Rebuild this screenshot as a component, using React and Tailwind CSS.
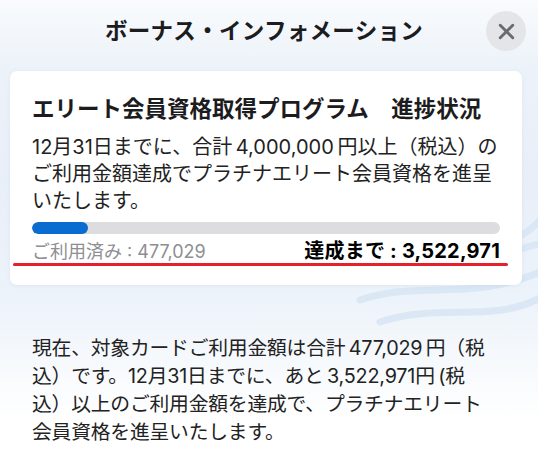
import { X } from 'lucide-react';

const used = 477029;
const goal = 4000000;

function Waves() {
  return (
    <svg className="absolute left-0 top-0" width="538" height="454" viewBox="0 0 538 454" fill="none">
      <g stroke="#d9e6f4" strokeWidth="7" strokeLinecap="round" opacity="0.9">
        <path d="M360 300 C 420 280, 470 302, 540 272" />
        <path d="M380 322 C 440 302, 490 324, 540 298" />
        <path d="M470 228 C 495 250, 520 242, 540 220" />
        <path d="M495 262 C 512 252, 526 246, 540 244" />
      </g>
    </svg>
  );
}

export default function App() {
  const pct = (used / goal) * 100;

  return (
    <div className="w-[550px] h-[454px] bg-white flex overflow-hidden font-['Inter','Noto_Sans_CJK_JP',sans-serif] text-[#1c1c1e]">
      <div className="relative w-[538px] h-full bg-[linear-gradient(180deg,#f9fbfd_0px,#ecf2f9_70px,#e8eff8_180px,#edf3fa_300px,#ffffff_420px)]">
        <Waves />

        <div className="relative">
          {/* header */}
          <div className="h-[62px] flex items-center justify-center pr-[10px]">
            <h1 className="text-[22.5px] font-bold tracking-[0.3px]">ボーナス・インフォメーション</h1>
          </div>
          <button className="absolute right-[12px] top-[11px] w-[40px] h-[40px] rounded-full bg-[#e4e5e8] flex items-center justify-center text-[#6a6a6f]">
            <X size={25} strokeWidth={2.8} />
          </button>

          {/* progress card */}
          <div className="ml-[10px] mt-[9px] w-[512px] bg-white rounded-[7px] shadow-[0_1px_4px_rgba(120,150,190,0.12)] px-[22px] pt-[23px] pb-[19px]">
            <h2 className="text-[22.5px] leading-[30px] font-bold whitespace-nowrap">
              エリート会員資格取得プログラム　進捗状況
            </h2>
            <div className="mt-[10px] text-[20px] leading-[27px] text-[#222]">
              <div className="whitespace-nowrap">12月31日までに、合計&#8201;4,000,000&#8201;円以上（税込）の</div>
              <div className="whitespace-nowrap">ご利用金額達成でプラチナエリート会員資格を進呈</div>
              <div className="whitespace-nowrap">いたします。</div>
            </div>

            <div className="mt-[7px] h-[12px] w-full rounded-full bg-[#dddddf] overflow-hidden">
              <div className="h-full rounded-full bg-[#0a6bd1]" style={{ width: `${pct}%` }} />
            </div>

            <div className="mt-[6px] flex items-baseline justify-between leading-[22px]">
              <span className="text-[18px] text-[#8e8e93]">ご利用済み : 477,029</span>
              <span className="text-[20px] font-bold text-black tracking-[0.2px]">達成まで : 3,522,971</span>
            </div>
            <div className="ml-[-19px] w-[495px] h-[3px] rounded-full bg-[#e3202b]" />
          </div>

          {/* summary */}
          <div className="ml-[32px] mt-[49px] text-[19.8px] leading-[28px] text-[#222] tracking-[-0.2px]">
            <div className="whitespace-nowrap">現在、対象カードご利用金額は合計&#8201;477,029&#8201;円（税</div>
            <div className="whitespace-nowrap">込）です。12月31日までに、あと&#8201;3,522,971円&#8201;(税</div>
            <div className="whitespace-nowrap">込）以上のご利用金額を達成で、プラチナエリート</div>
            <div className="whitespace-nowrap">会員資格を進呈いたします。</div>
          </div>
        </div>
      </div>
    </div>
  );
}
